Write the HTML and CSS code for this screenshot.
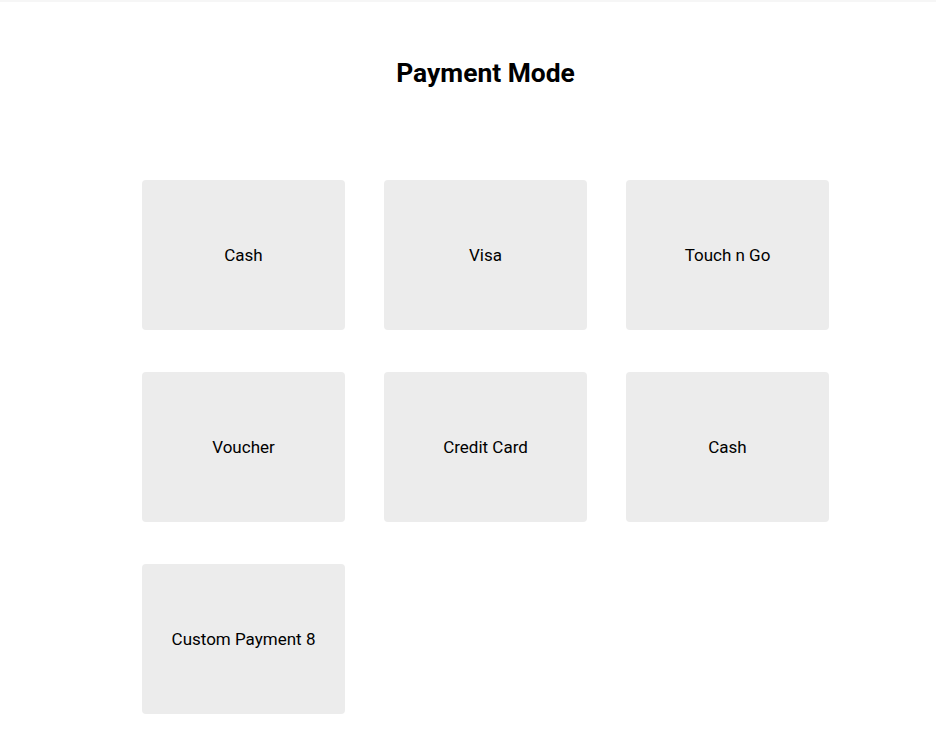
FILE: index.html
```html
<!DOCTYPE html>
<html>
<head>
<meta charset="utf-8">
<link rel="stylesheet" href="styles.css">
</head>
<body>
<div class="topbar"></div>
<main class="page">
  <h1 class="title">Payment Mode</h1>
  <div class="grid">
    <button class="card">Cash</button>
    <button class="card">Visa</button>
    <button class="card">Touch n Go</button>
    <button class="card">Voucher</button>
    <button class="card">Credit Card</button>
    <button class="card">Cash</button>
    <button class="card">Custom Payment 8</button>
  </div>
</main>
</body>
</html>
```
FILE: styles.css
```css
html, body {
  margin: 0;
  padding: 0;
  background: #ffffff;
  font-family: Roboto, "Liberation Sans", sans-serif;
  color: #111111;
}
.topbar {
  height: 2px;
  background: #f6f6f6;
}
.page {
  width: 687px;
  margin-left: 142px;
}
.title {
  margin: 0;
  padding-top: 56px;
  height: 34px;
  line-height: 30px;
  text-align: center;
  font-size: 26.4px;
  font-weight: 700;
  color: #000;
}
.grid {
  margin-top: 88px;
  display: grid;
  grid-template-columns: repeat(3, 203px);
  column-gap: 39px;
  row-gap: 42px;
}
.card {
  height: 150px;
  border: none;
  border-radius: 4px;
  background: #ececec;
  font-family: Roboto, "Liberation Sans", sans-serif;
  font-size: 17px;
  font-weight: 400;
  color: #000;
  padding: 0;
  display: flex;
  align-items: center;
  justify-content: center;
}
```
